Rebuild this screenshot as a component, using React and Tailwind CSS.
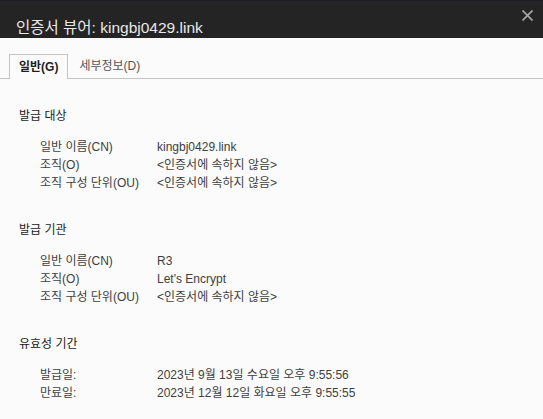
import React from 'react';

const font = { fontFamily: '"Liberation Sans", "Noto Sans CJK KR", sans-serif' };

const sections = [
    {
        title: '발급 대상',
        rows: [
            ['일반 이름(CN)', 'kingbj0429.link'],
            ['조직(O)', '<인증서에 속하지 않음>'],
            ['조직 구성 단위(OU)', '<인증서에 속하지 않음>'],
        ],
    },
    {
        title: '발급 기관',
        rows: [
            ['일반 이름(CN)', 'R3'],
            ['조직(O)', "Let's Encrypt"],
            ['조직 구성 단위(OU)', '<인증서에 속하지 않음>'],
        ],
    },
    {
        title: '유효성 기간',
        rows: [
            ['발급일:', '2023년 9월 13일 수요일 오후 9:55:56'],
            ['만료일:', '2023년 12월 12일 화요일 오후 9:55:55'],
        ],
    },
];

const App = () => {
    return (
        <div className="w-[543px] h-[419px] overflow-hidden bg-[#fbfbfb]" style={font}>
            <div className="flex justify-between h-[38px] bg-[#242424] border-t border-[#1b1b2c] pl-4 pr-[10px]">
                <p className="text-[15.5px] leading-[20px] text-[#e8e8e8] pt-[17px]">인증서 뷰어: kingbj0429.link</p>
                <svg className="w-[11px] h-[11px] mt-[9px]" viewBox="0 0 10 10">
                    <path d="M1 1 L9 9 M9 1 L1 9" stroke="#a0a3a8" strokeWidth="1.6" strokeLinecap="square" />
                </svg>
            </div>

            <div className="flex items-end h-[41px] pl-[9px] border-b border-[#c4c4c4]">
                <div className="flex items-center h-[25px] px-[9px] -mb-px bg-[#fbfbfb] border border-b-0 border-[#c4c4c4] text-[12px] font-bold text-[#1f1f1f]">
                    일반(G)
                </div>
                <div className="flex items-center h-[25px] px-[11px] text-[12px] text-[#555]">
                    세부정보(D)
                </div>
            </div>

            <div className="flex flex-col gap-[29px] pt-[28px] pl-[19px]">
                {sections.map((section, i) => (
                    <div key={i}>
                        <p className="text-[12px] leading-[18px] text-[#1a1a1a]">{section.title}</p>
                        <div className="flex flex-col mt-[13px] pl-[21px]">
                            {section.rows.map(([label, value], j) => (
                                <div key={j} className="flex text-[12px] leading-[18px] text-[#404040]">
                                    <span className="w-[117px]">{label}</span>
                                    <span>{value}</span>
                                </div>
                            ))}
                        </div>
                    </div>
                ))}
            </div>
        </div>
    );
};

export default App;
